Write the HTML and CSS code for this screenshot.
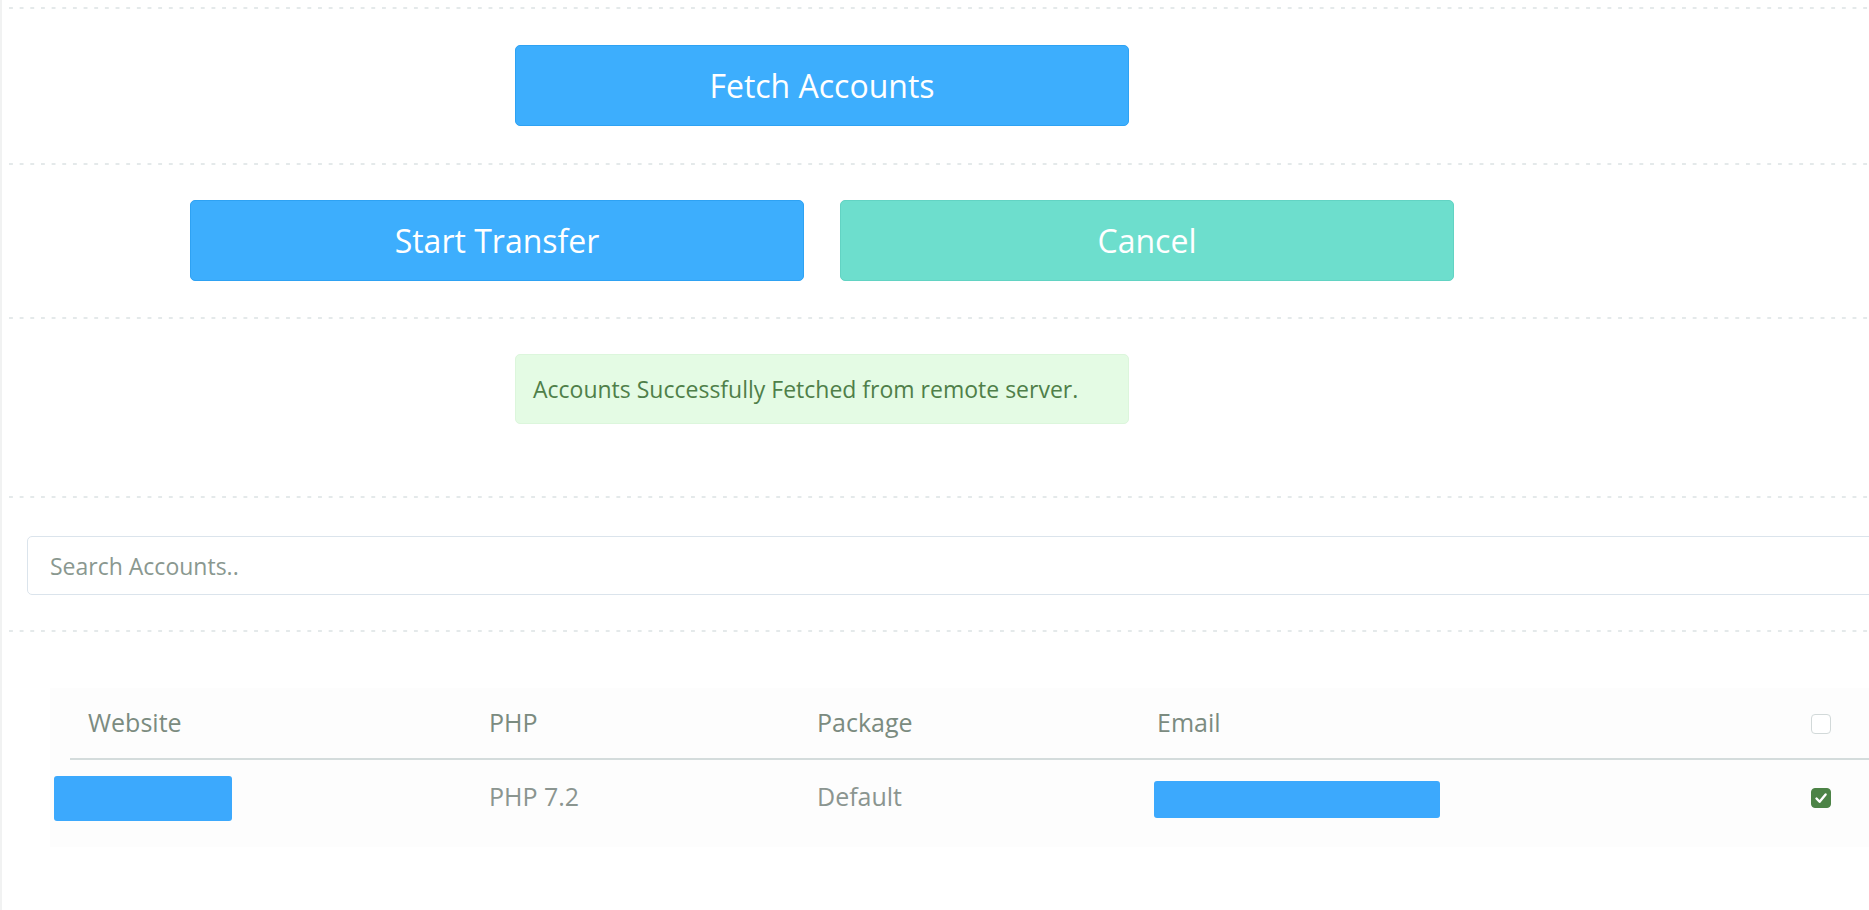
FILE: index.html
```html
<!DOCTYPE html>
<html>
<head>
<meta charset="utf-8">
<title>Transfer Accounts</title>
<link rel="stylesheet" href="styles.css">
</head>
<body>
<div class="page">
  <div class="sep"></div>
  <div class="section s-fetch">
    <button class="btn btn-blue">Fetch Accounts</button>
  </div>
  <div class="sep"></div>
  <div class="section s-actions">
    <button class="btn btn-blue">Start Transfer</button>
    <button class="btn btn-teal">Cancel</button>
  </div>
  <div class="sep"></div>
  <div class="section s-alert">
    <div class="alert">Accounts Successfully Fetched from remote server.</div>
  </div>
  <div class="sep"></div>
  <div class="section s-search">
    <input class="search" type="text" placeholder="Search Accounts..">
  </div>
  <div class="sep"></div>
  <div class="section s-table">
    <div class="table-wrap">
      <table class="accounts">
        <thead>
          <tr>
            <th class="c-web">Website</th>
            <th class="c-php">PHP</th>
            <th class="c-pkg">Package</th>
            <th class="c-mail">Email</th>
            <th class="c-chk"><span class="chk"></span></th>
          </tr>
        </thead>
        <tbody>
          <tr>
            <td class="c-web"><span class="redact redact-web"></span></td>
            <td class="c-php">PHP 7.2</td>
            <td class="c-pkg">Default</td>
            <td class="c-mail"><span class="redact redact-mail"></span></td>
            <td class="c-chk"><span class="chk checked"><svg viewBox="0 0 20 20" width="20" height="20"><path d="M5.5 10.5 L8.6 13.8 L14.6 6.4" fill="none" stroke="#fff" stroke-width="2.4" stroke-linecap="round" stroke-linejoin="round"/></svg></span></td>
          </tr>
        </tbody>
      </table>
    </div>
  </div>
</div>
</body>
</html>
```

FILE: styles.css
```css
html, body {
  margin: 0;
  padding: 0;
  background: #ffffff;
  overflow: hidden;
}

body {
  font-family: "Open Sans", "Noto Sans", sans-serif;
  width: 1869px;
  height: 910px;
}

.page {
  width: 1869px;
  height: 910px;
  overflow: hidden;
  border-left: 2px solid #f1f2f2;
  padding-left: 7px;
  padding-top: 7px;
  box-sizing: border-box;
}

.sep {
  height: 2px;
  background-image: linear-gradient(to right, #e4e9ea 0, #e4e9ea 4px, transparent 4px);
  background-size: 10.66px 2px;
  background-repeat: repeat-x;
}

.section {
  display: flex;
  box-sizing: border-box;
}

.btn {
  font-family: "Open Sans", "Noto Sans", sans-serif;
  font-size: 32px;
  color: #ffffff;
  width: 614px;
  height: 81px;
  flex: none;
  border-radius: 5px;
  border: 1px solid transparent;
  padding: 0;
  cursor: pointer;
}

.btn-blue {
  background: #3daefd;
  border-color: #2ea2f3;
}

.btn-teal {
  background: #6ddecd;
  border-color: #62d3c3;
}

.s-fetch {
  padding: 36px 0 37px 506px;
}

.s-actions {
  padding: 35px 0 36px 181px;
  gap: 36px;
}

.s-alert {
  padding: 35px 0 72px 506px;
}

.alert {
  width: 614px;
  height: 70px;
  flex: none;
  box-sizing: border-box;
  background: #e4fbe4;
  border: 1px solid #dcf6dc;
  border-radius: 5px;
  color: #4f7f49;
  font-size: 23px;
  display: flex;
  align-items: center;
  padding-left: 17px;
}

.s-search {
  padding: 38px 0 35px 18px;
}

.search {
  width: 1900px;
  flex: none;
  height: 59px;
  box-sizing: border-box;
  border: 1px solid #dbe4ec;
  border-radius: 5px;
  padding: 0 0 0 22px;
  font-family: "Open Sans", "Noto Sans", sans-serif;
  font-size: 23px;
  color: #6f7f78;
  outline: none;
}

.search::placeholder {
  color: #8a9890;
}

.s-table {
  padding: 56px 0 0 41px;
}

.table-wrap {
  flex: none;
  background: #fdfdfd;
  padding: 0 0 16px 20px;
}

.accounts {
  border-collapse: collapse;
  width: 1900px;
  table-layout: fixed;
  font-size: 25px;
}

.accounts th {
  font-weight: 400;
  color: #7b8b80;
  text-align: left;
  line-height: 34px;
  padding: 17px 0 19px 18px;
  vertical-align: bottom;
  border-bottom: 2px solid #d4dcdc;
}

.accounts td {
  color: #8b9590;
  line-height: 34px;
  height: 72px;
  box-sizing: border-box;
  padding: 19px 0 0 18px;
  vertical-align: top;
}

.accounts th.c-web { width: 383px; }
.accounts th.c-php { width: 310px; }
.accounts th.c-pkg { width: 322px; }
.accounts th.c-mail { width: 654px; }

.accounts .c-chk {
  padding-left: 0;
}

.chk {
  display: block;
  width: 20px;
  height: 20px;
  box-sizing: border-box;
  border: 1px solid #d2d9d9;
  border-radius: 4px;
  background: #ffffff;
  margin-bottom: 5px;
}

.accounts td.c-web {
  padding-top: 16px;
}

.accounts td.c-mail {
  padding-top: 21px;
}

.accounts td.c-chk {
  padding-top: 28px;
}

.chk.checked {
  background: #4c8346;
  border-color: #4c8346;
  margin: 0;
}

.chk.checked svg {
  display: block;
  margin: -1px;
}

.redact {
  display: block;
  background: #3ca9fd;
  border-radius: 3px;
}

.redact-web {
  width: 178px;
  height: 45px;
  margin-left: -34px;
}

.redact-mail {
  width: 286px;
  height: 37px;
  margin-left: -3px;
}
```
